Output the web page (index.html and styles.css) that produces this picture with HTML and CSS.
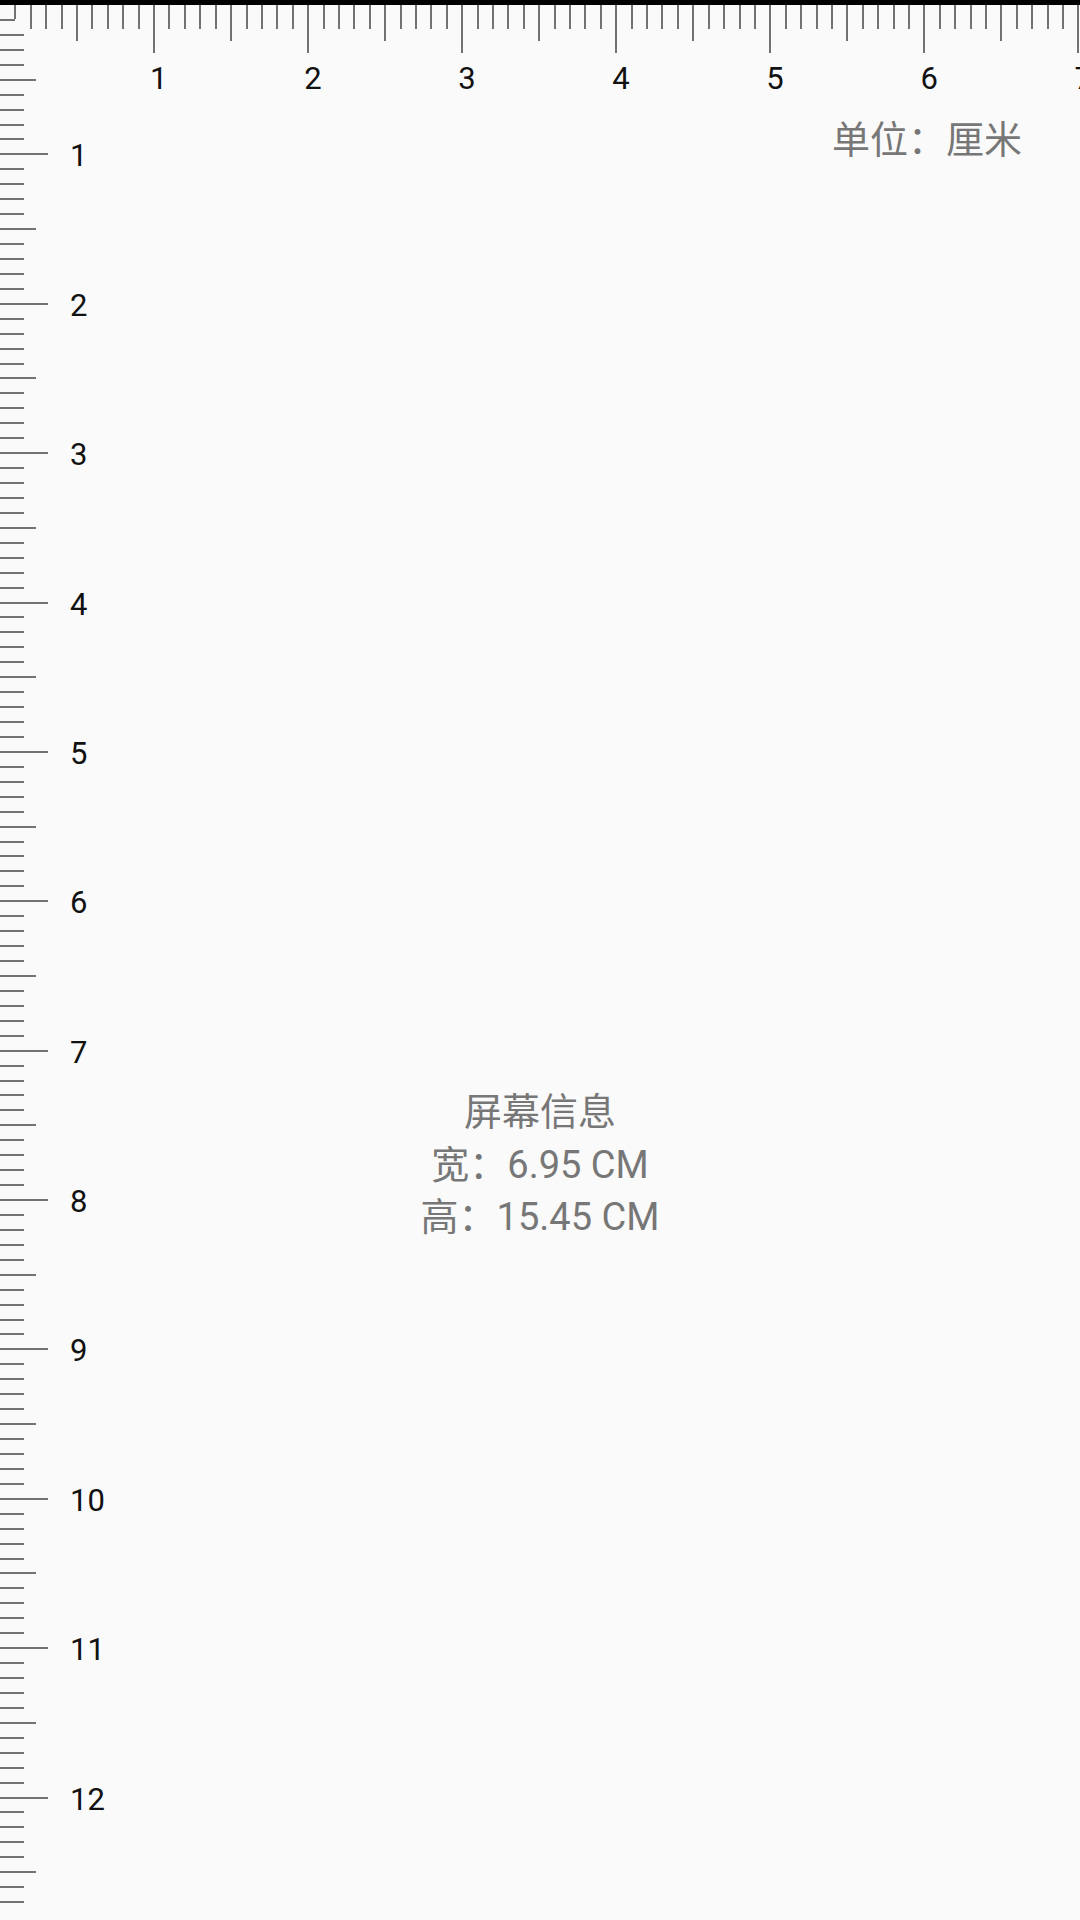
FILE: index.html
```html
<!DOCTYPE html>
<html lang="zh-CN">
<head>
<meta charset="utf-8">
<title>尺子</title>
<link rel="stylesheet" href="styles.css">
</head>
<body>
<div class="topbar"></div>
<main class="screen">
  <div class="hruler" id="hruler"></div>
  <div class="vruler" id="vruler"></div>
  <div class="unit">单位：厘米</div>
  <div class="info">
    <div class="info-line">屏幕信息</div>
    <div class="info-line">宽：6.95 CM</div>
    <div class="info-line">高：15.45 CM</div>
  </div>
</main>
<script src="script.js"></script>
</body>
</html>
```

FILE: styles.css
```css
html, body {
  margin: 0;
  padding: 0;
}
body {
  width: 1080px;
  height: 1920px;
  overflow: hidden;
  background: #fafafa;
  font-family: Roboto, "Noto Sans CJK SC", sans-serif;
}
.topbar {
  height: 5px;
  background: #000;
}
.screen {
  display: grid;
  grid-template-columns: 1080px;
  grid-template-rows: 1915px;
  overflow: hidden;
}
.screen > * {
  grid-area: 1 / 1;
}

/* horizontal ruler */
.hruler {
  display: flex;
  align-self: start;
  justify-self: start;
}
.hcell {
  flex: 0 0 15.417px;
  width: 15.417px;
  display: flex;
  flex-direction: column;
  align-items: flex-start;
}
.htick {
  width: 2px;
  height: 24px;
  margin-left: -1px;
  background: #727272;
}
.hcell.half .htick { height: 36px; }
.hcell.cm .htick { height: 48px; }
.hcell.first .htick { height: 14px; }
.hlabel {
  margin-top: 10px;
  margin-left: -4px;
  font-size: 31px;
  line-height: 31px;
  color: #111;
  white-space: nowrap;
}

/* vertical ruler */
.vruler {
  display: flex;
  flex-direction: column;
  align-self: start;
  justify-self: start;
}
.vcell {
  flex: 0 0 14.945px;
  height: 14.945px;
  display: flex;
  align-items: flex-start;
}
.vtick {
  flex: none;
  width: 24px;
  height: 2px;
  margin-top: -1px;
  background: #727272;
}
.vcell.half .vtick { width: 36px; }
.vcell.cm .vtick { width: 48px; }
.vcell.first .vtick { width: 15px; }
.vlabel {
  height: 0;
  margin-top: 2px;
  margin-left: 22px;
  font-size: 31px;
  line-height: 0;
  color: #111;
  white-space: nowrap;
}

/* texts */
.unit {
  align-self: start;
  justify-self: end;
  margin-top: 109px;
  margin-right: 58px;
  font-size: 38px;
  line-height: 52px;
  color: #777;
  white-space: nowrap;
}
.info {
  align-self: start;
  justify-self: center;
  margin-top: 1081px;
  text-align: center;
  font-size: 38px;
  line-height: 52.5px;
  color: #777;
}
.info-line {
  white-space: nowrap;
}
```

FILE: script.js
```js
(function () {
  function kind(i) {
    if (i === 1) return ' first';
    if (i % 10 === 0) return ' cm';
    if (i % 5 === 0) return ' half';
    return '';
  }
  var h = document.getElementById('hruler');
  for (var i = 0; i <= 70; i++) {
    var c = document.createElement('div');
    c.className = 'hcell' + kind(i);
    if (i > 0) {
      var t = document.createElement('div');
      t.className = 'htick';
      c.appendChild(t);
      if (i % 10 === 0) {
        var l = document.createElement('div');
        l.className = 'hlabel';
        l.textContent = String(i / 10);
        c.appendChild(l);
      }
    }
    h.appendChild(c);
  }
  var v = document.getElementById('vruler');
  for (var j = 0; j < 128; j++) {
    var d = document.createElement('div');
    d.className = 'vcell' + kind(j);
    if (j > 0) {
      var vt = document.createElement('div');
      vt.className = 'vtick';
      d.appendChild(vt);
      if (j % 10 === 0) {
        var vl = document.createElement('div');
        vl.className = 'vlabel';
        vl.textContent = String(j / 10);
        d.appendChild(vl);
      }
    }
    v.appendChild(d);
  }
})();
```
